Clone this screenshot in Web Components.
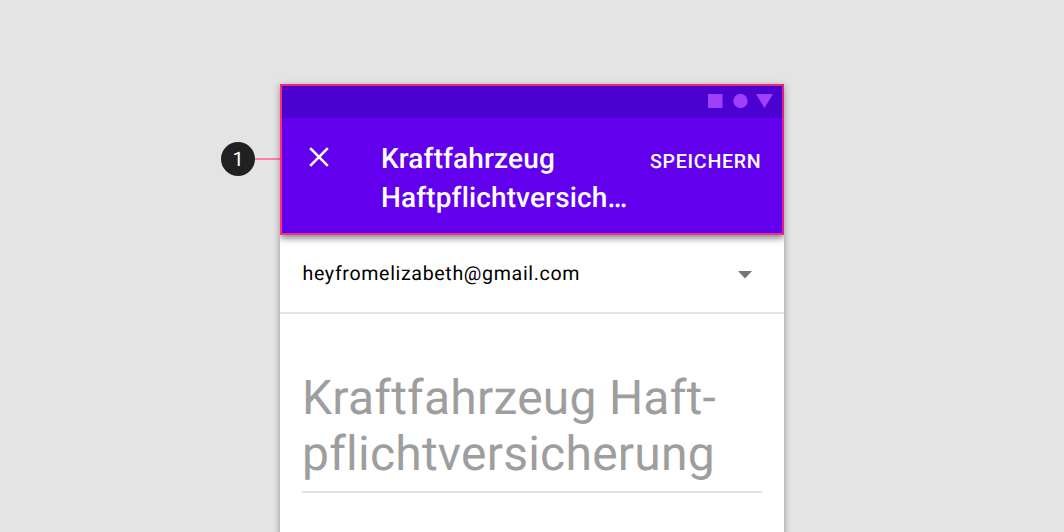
<!DOCTYPE html>
<html lang="de">
<head>
<meta charset="utf-8">
<title>Full-screen dialog</title>
<style>
html,body{margin:0;height:100%;overflow:hidden;background:#e4e4e4;font-family:Roboto,sans-serif;text-rendering:geometricPrecision;font-variant-ligatures:none}
</style>
</head>
<body>
<spec-canvas>
  <call-out slot="marker">1</call-out>
  <phone-frame>
    <app-bar slot="bar">
      <span slot="title">Kraftfahrzeug<br>Haftpflichtversich…</span>
      <span slot="action">SPEICHERN</span>
    </app-bar>
    <account-select>heyfromelizabeth@gmail.com</account-select>
    <subject-field>Kraftfahrzeug Haft-<br>pflichtversicherung</subject-field>
  </phone-frame>
</spec-canvas>
<script>
const define = (name, html) => customElements.define(name, class extends HTMLElement {
  constructor() {
    super();
    this.attachShadow({ mode: 'open' }).innerHTML = html;
  }
});

define('spec-canvas', `
<style>
:host{display:grid;grid-template-columns:280px 504px 1fr;height:532px;padding-top:84px;box-sizing:border-box;overflow:hidden}
.left{display:flex;justify-content:flex-end;align-items:flex-start;padding-top:58px}
</style>
<div class="left"><slot name="marker"></slot></div><slot></slot>`);

define('call-out', `
<style>
:host{display:flex;align-items:center}
.dot{width:34px;height:34px;border-radius:50%;background:#212121;color:#fff;font:400 20px/35px Roboto,sans-serif;text-align:center}
.line{width:25px;height:2px;background:#ff81a3}
</style>
<div class="dot"><slot></slot></div><div class="line"></div>`);

define('phone-frame', `
<style>
:host{display:flex;flex-direction:column;height:470px;background:#fff;box-shadow:0 2px 7px rgba(0,0,0,.38)}
</style>
<slot name="bar"></slot><slot></slot>`);

define('app-bar', `
<style>
:host{display:block;position:relative;box-sizing:border-box;height:151px;border:2px solid;border-color:#f02777 #dc208c #ee3088 #ff2d6f;background:#6200ee;color:#fff;box-shadow:0 3px 7px rgba(0,0,0,.5);clip-path:inset(0 0 -20px 0)}
.status{display:flex;justify-content:flex-end;height:31.500px;background:#4b01d0}
.status svg{display:block}
.row{display:flex;align-items:flex-start}
.close{margin:29px 0 0 27px;display:block}
.title{margin:21px 0 0 52px;width:269px;font:500 28px/39px Roboto,sans-serif;letter-spacing:.14px;white-space:nowrap}
.action{margin-top:32px;font:500 19.600px/24px Roboto,sans-serif;letter-spacing:.72px}
</style>
<div class="status"><svg width="80" height="31" fill="#a040ff"><path d="M6 8h14.500v14H6z"/><circle cx="38.500" cy="15" r="7.200"/><path d="M54 8h17l-8.500 14z"/></svg></div>
<div class="row">
<svg class="close" width="20" height="20" fill="none" stroke="#fff" stroke-width="2.600"><path d="M1.200 1.200l17.600 17.600M18.800 1.200l-17.600 17.600"/></svg>
<div class="title"><slot name="title"></slot></div>
<div class="action"><slot name="action"></slot></div>
</div>`);

define('account-select', `
<style>
:host{display:flex;justify-content:space-between;align-items:center;box-sizing:border-box;height:79px;padding:1px 32px 0 22.500px;border-bottom:2px solid #e3e3e3;font:400 19.600px/24px Roboto,sans-serif;letter-spacing:.65px;color:#000}
svg{display:block;margin-top:2px}
</style>
<span><slot></slot></span><svg width="14" height="8" fill="#757575"><path d="M0 0h14L7 7.500z"/></svg>`);

define('subject-field', `
<style>
:host{display:block;margin:56px 22px 0;padding-bottom:9px;border-bottom:2px solid #e3e3e3;font:400 48px/56px Roboto,sans-serif;letter-spacing:.23px;color:#9e9e9e;white-space:nowrap}
</style>
<slot></slot>`);
</script>
</body>
</html>
